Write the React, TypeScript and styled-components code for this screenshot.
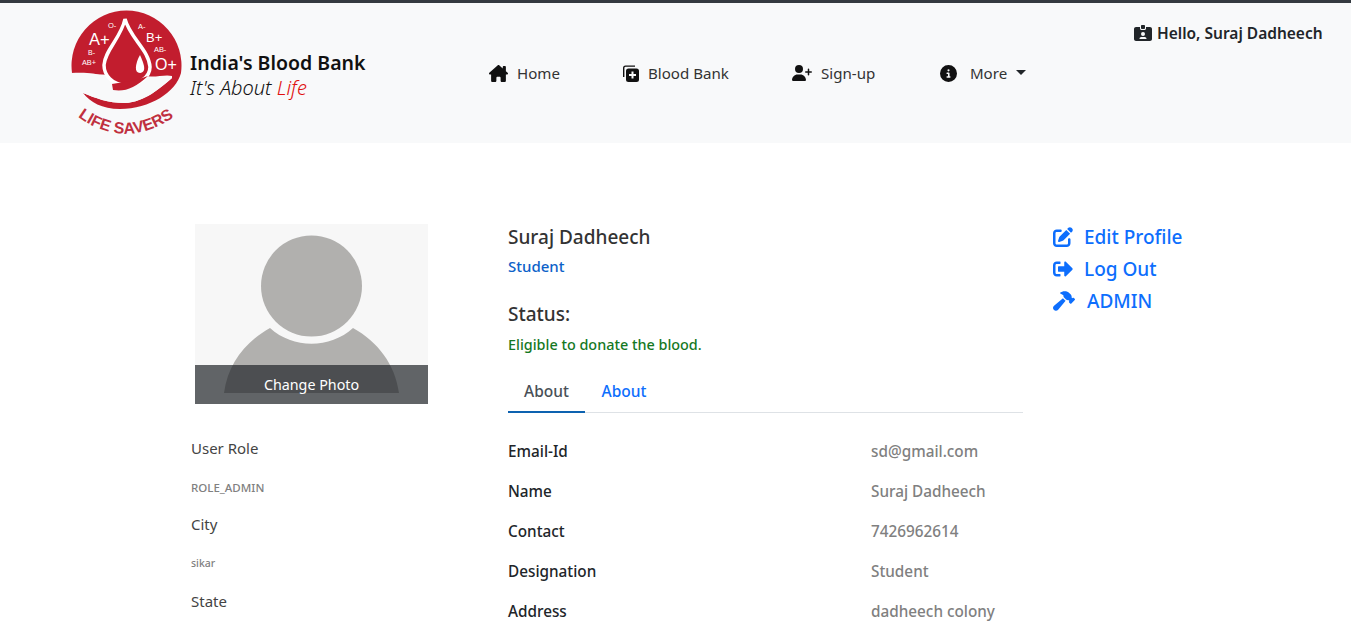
import styled, { createGlobalStyle } from "styled-components";
import { FaSignOutAlt } from "react-icons/fa";
import {
    FaHouseChimney,
    FaUserPlus,
    FaCircleInfo,
    FaPenToSquare,
    FaHammer,
    FaIdCardClip,
} from "react-icons/fa6";

const GlobalStyle = createGlobalStyle`
    * { box-sizing: border-box; }
    html, body {
        margin: 0;
        height: 628px;
        overflow: hidden;
        background: #fff;
        font-family: "Noto Sans", "Open Sans", sans-serif;
        color: #212529;
    }
`;

const Navbar = styled.nav`
    display: flex;
    height: 143px;
    border-top: 3px solid #343a40;
    background: #f8f9fa;
`;

const Brand = styled.div`
    display: flex;
    align-items: flex-start;
    margin-left: 71px;
    width: 418px;
    padding-top: 5px;
`;

const BrandText = styled.div`
    margin: 43px 0 0 7px;
`;

const BrandName = styled.div`
    font-size: 19.5px;
    line-height: 23px;
    font-weight: 600;
    color: #111;
`;

const Tagline = styled.div`
    font-size: 20px;
    line-height: 27px;
    font-style: italic;
    font-weight: 300;
    color: #111;
`;

const Life = styled.span`
    color: #e01010;
`;

const NavLinks = styled.div`
    display: flex;
    height: 140px;
    align-items: center;
    width: 645px;
`;

const NavItem = styled.a<{ $width: number }>`
    display: flex;
    align-items: center;
    gap: 9px;
    width: ${(p) => p.$width}px;
    font-size: 15.1px;
    color: #333;
    svg {
        color: #111;
        flex-shrink: 0;
    }
`;

const Caret = styled.span`
    width: 0;
    height: 0;
    margin: 0 0 2px 0;
    border-top: 5px solid #212529;
    border-left: 5px solid transparent;
    border-right: 5px solid transparent;
`;

const Greeting = styled.div`
    display: flex;
    align-items: center;
    gap: 5px;
    height: 20px;
    margin-top: 20px;
    font-size: 15.5px;
    font-weight: 600;
    color: #212529;
`;

const Content = styled.main`
    display: grid;
    grid-template-columns: 317px 544px auto;
    padding: 77px 0 0 191px;
`;

const SideColumn = styled.div`
    display: flex;
    flex-direction: column;
    padding-top: 4px;
`;

const Avatar = styled.div`
    position: relative;
    width: 233px;
    height: 180px;
    margin: 0 0 27px 4px;
    background: #f7f7f7;
    overflow: hidden;
`;

const AvatarOverlay = styled.div`
    position: absolute;
    left: 0;
    right: 0;
    bottom: 0;
    height: 39px;
    padding-top: 9px;
    text-align: center;
    font-size: 14.3px;
    line-height: 21px;
    color: #fff;
    background: rgba(33, 37, 41, 0.7);
`;

const SideLabel = styled.div`
    height: 38px;
    font-size: 15px;
    line-height: 34px;
    color: #444;
`;

const SideValue = styled.div<{ $size: number }>`
    height: 38.4px;
    font-size: ${(p) => p.$size}px;
    font-weight: 500;
    line-height: 37px;
    color: #808080;
`;

const MainColumn = styled.div`
    display: flex;
    flex-direction: column;
    padding-top: 4px;
`;

const Name = styled.h5`
    margin: 0;
    font-size: 19px;
    font-weight: 500;
    line-height: 26px;
    color: #333;
`;

const Role = styled.h6`
    margin: 6px 0 0;
    font-size: 15px;
    font-weight: 500;
    line-height: 20px;
    color: #0d62c9;
`;

const StatusTitle = styled(Name)`
    margin-top: 25px;
`;

const StatusText = styled.div`
    margin-top: 8px;
    font-size: 14.4px;
    font-weight: 500;
    line-height: 20px;
    color: #15781f;
`;

const Tabs = styled.div`
    display: flex;
    width: 515px;
    height: 47px;
    margin-top: 11px;
    border-bottom: 1px solid #dee2e6;
`;

const Tab = styled.a<{ $active?: boolean }>`
    width: ${(p) => (p.$active ? "77px" : "78px")};
    height: 47px;
    text-align: center;
    font-size: 15.5px;
    font-weight: 500;
    line-height: 51px;
    color: ${(p) => (p.$active ? "#495057" : "#0d6efd")};
    border-bottom: 2px solid ${(p) => (p.$active ? "#0d62b0" : "transparent")};
`;

const InfoList = styled.div`
    margin-top: 18px;
`;

const InfoRow = styled.div`
    display: grid;
    grid-template-columns: 363px auto;
    height: 40px;
    font-size: 15.3px;
    font-weight: 500;
    line-height: 40px;
    color: #212529;
`;

const InfoValue = styled.span`
    color: #808080;
`;

const Actions = styled.div`
    display: flex;
    flex-direction: column;
    padding: 1px 0 0 1px;
`;

const ActionLink = styled.a<{ $gap: number }>`
    display: flex;
    align-items: center;
    gap: ${(p) => p.$gap}px;
    height: 32px;
    font-size: 19px;
    font-weight: 500;
    color: #0d6efd;
`;

function Logo() {
    return (
        <svg width="112" height="130" viewBox="71 8 112 130">
            <defs>
                <path id="savers" d="M77 116 Q125 152 177 115" />
            </defs>
            <path
                d="M72 73 A55 55 0 1 1 181 73 C176 92 150 109 120 109 C102 109 90 102 83 93 C95 98 108 103 125 103 C145 102 160 88 172 78 Z"
                fill="#c21d2e"
            />
            <path
                d="M70 73 C85 72 95 73 103 76 C106 84 108 90 113 92 C125 94 135 90 146 76 C155 78 165 74 172 76 L172 78 C160 88 145 102 125 103 C108 103 95 98 83 93 L70 85 Z"
                fill="#f8f9fa"
            />
            <path
                d="M125 19 C130 38 149 50 150 67 C150 77 139 85 126 85 C112 85 104 75 104 65 C105 50 121 38 125 19 Z"
                fill="#c21d2e"
                stroke="#fff"
                strokeWidth="3.500"
            />
            <path d="M113 90 C125 92 135 88 148 76 L136 80 L112 84 Z" fill="#c21d2e" />
            <path d="M140 55 C144 64 147 72 140 73 C134 73 135 64 140 55 Z" fill="#fff" />
            <g fill="#fff" fontFamily="Liberation Sans, sans-serif">
                <text x="89" y="45" fontSize="16.500">A+</text>
                <text x="108" y="28" fontSize="7.500">O-</text>
                <text x="138" y="29" fontSize="7.500">A-</text>
                <text x="146" y="42" fontSize="13">B+</text>
                <text x="154" y="52" fontSize="7.400">AB-</text>
                <text x="88" y="55" fontSize="7">B-</text>
                <text x="82" y="65" fontSize="7.300">AB+</text>
                <text x="155" y="70" fontSize="16">O+</text>
            </g>
            <text fill="#c0303f" fontFamily="Liberation Sans, sans-serif" fontWeight="700" fontSize="16">
                <textPath href="#savers" startOffset="1">LIFE SAVERS</textPath>
            </text>
        </svg>
    );
}

function BloodBankIcon() {
    return (
        <svg width="16" height="17" viewBox="0 0 16 17" fill="#111">
            <path d="M0 12V3a2.500 2.500 0 0 1 2.500-2.500H12v1.300H2.700A1.300 1.300 0 0 0 1.400 3.100V12z" />
            <path d="M5.500 3.500h8A2.500 2.500 0 0 1 16 6v8.500a2.500 2.500 0 0 1-2.500 2.500h-8A2.500 2.500 0 0 1 3 14.500V6a2.500 2.500 0 0 1 2.500-2.500z" />
            <path d="M8.500 6.500h2V9H13v2h-2.500v2.500h-2V11H6V9h2.500z" fill="#f8f9fa" />
        </svg>
    );
}

function AvatarPicture() {
    return (
        <svg width="233" height="180" viewBox="0 0 233 180">
            <circle cx="116.500" cy="62" r="50.500" fill="#b1b0ae" />
            <path d="M29 169 C33 140 50 118 75 104 C98 125 135 125 158 104 C183 118 200 140 204 169 Z" fill="#b1b0ae" />
        </svg>
    );
}

const sideRows = [
    { label: "User Role", value: "ROLE_ADMIN", size: 11.5 },
    { label: "City", value: "sikar", size: 10.5 },
];

const infoRows = [
    ["Email-Id", "sd@gmail.com"],
    ["Name", "Suraj Dadheech"],
    ["Contact", "7426962614"],
    ["Designation", "Student"],
    ["Address", "dadheech colony"],
];

export default function App() {
    return (
        <>
            <GlobalStyle />
            <Navbar>
                <Brand>
                    <Logo />
                    <BrandText>
                        <BrandName>India's Blood Bank</BrandName>
                        <Tagline>
                            It's About <Life>Life</Life>
                        </Tagline>
                    </BrandText>
                </Brand>
                <NavLinks>
                    <NavItem $width={134}><FaHouseChimney size={19} />Home</NavItem>
                    <NavItem $width={169}><BloodBankIcon />Blood Bank</NavItem>
                    <NavItem $width={148}><FaUserPlus size={20} />Sign-up</NavItem>
                    <NavItem $width={120}>
                        <FaCircleInfo size={17} />
                        &nbsp;More
                        <Caret />
                    </NavItem>
                </NavLinks>
                <Greeting>
                    <FaIdCardClip size={18} />
                    Hello, Suraj Dadheech
                </Greeting>
            </Navbar>
            <Content>
                <SideColumn>
                    <Avatar>
                        <AvatarPicture />
                        <AvatarOverlay>Change Photo</AvatarOverlay>
                    </Avatar>
                    {sideRows.map((row) => (
                        <div key={row.label}>
                            <SideLabel>{row.label}</SideLabel>
                            <SideValue $size={row.size}>{row.value}</SideValue>
                        </div>
                    ))}
                    <SideLabel>State</SideLabel>
                </SideColumn>
                <MainColumn>
                    <Name>Suraj Dadheech</Name>
                    <Role>Student</Role>
                    <StatusTitle>Status:</StatusTitle>
                    <StatusText>Eligible to donate the blood.</StatusText>
                    <Tabs>
                        <Tab $active>About</Tab>
                        <Tab>About</Tab>
                    </Tabs>
                    <InfoList>
                        {infoRows.map(([label, value]) => (
                            <InfoRow key={label}>
                                <span>{label}</span>
                                <InfoValue>{value}</InfoValue>
                            </InfoRow>
                        ))}
                    </InfoList>
                </MainColumn>
                <Actions>
                    <ActionLink $gap={11}><FaPenToSquare size={20} />Edit Profile</ActionLink>
                    <ActionLink $gap={11}><FaSignOutAlt size={20} />Log Out</ActionLink>
                    <ActionLink $gap={12}><FaHammer size={22} />ADMIN</ActionLink>
                </Actions>
            </Content>
        </>
    );
}
